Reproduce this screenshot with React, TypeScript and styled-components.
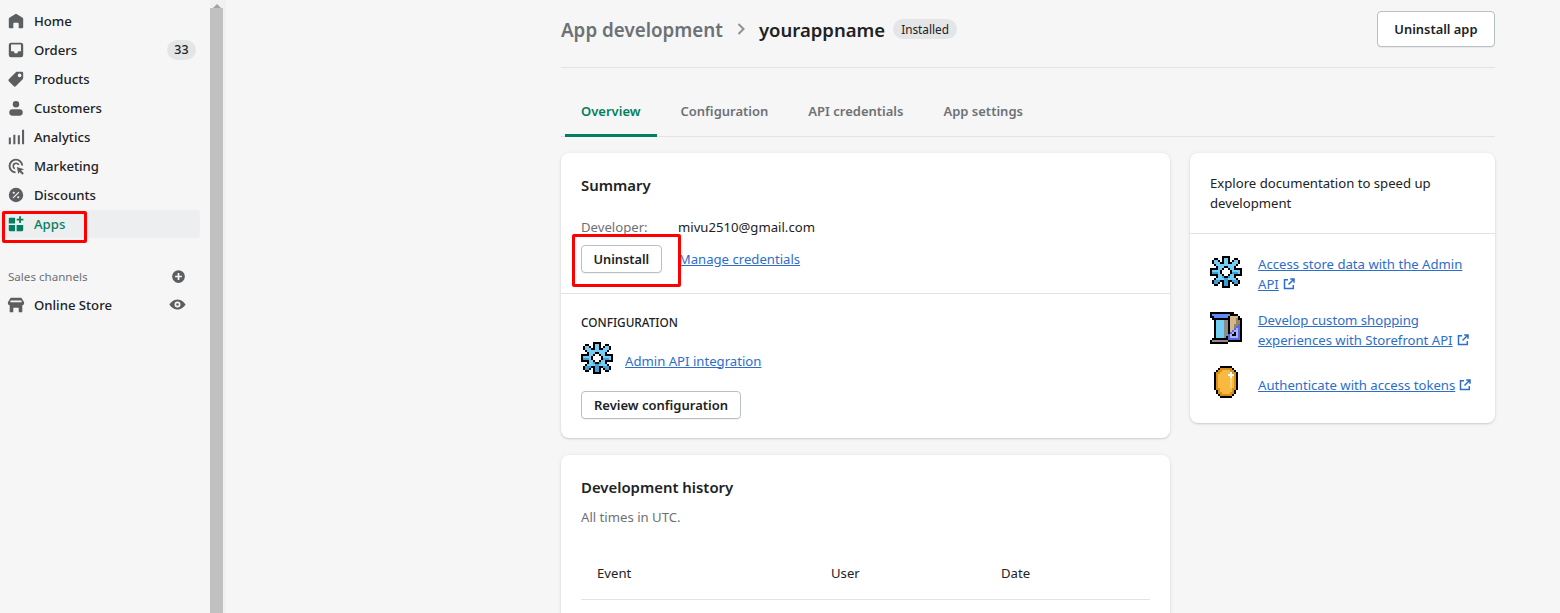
import React from "react";
import styled, { createGlobalStyle } from "styled-components";

const GlobalStyle = createGlobalStyle`
  html, body {
    margin: 0;
    padding: 0;
    overflow: hidden;
    background: #f6f6f7;
    font-family: "Noto Sans", "Liberation Sans", sans-serif;
    font-size: 13.15px;
    color: #202223;
  }
  * { box-sizing: border-box; }
`;

const GEAR = [
  "......kkkk......",
  "..kk..kbbk..kk..",
  ".kbbk.kbbk.kbbk.",
  ".kbbbkkbbkkbbbk.",
  "..kbbbbbbbbbbk..",
  "...kbbbkkbbbk...",
  "kkkkbbk..kbbkkkk",
  "kbbbbk....kbbbbk",
  "kdddbk....kdddbk",
  "kkkkbbk..kbbkkkk",
  "...kbbdkkdbbk...",
  "..kbbbbddbbbbk..",
  ".kdddkkddkkdddk.",
  ".kddk.kddk.kddk.",
  "..kk..kddk..kk..",
  "......kkkk......",
];

const TOKEN = [
  ".....kkkkkk.....",
  "....kooooook....",
  "...kooyyyyook...",
  "..kooyyyyywook..",
  "..koyyyyywwwok..",
  "..koyyyyyywyok..",
  "..koyyyyyylyok..",
  "..koyyyyyylyok..",
  "..koyyyyyylyok..",
  "..koyyyyyylyok..",
  "..koyyyyyylyok..",
  "..kooyyyyyyook..",
  "...koyyyyyyok...",
  "...kooyyyyook...",
  "....kooooook....",
  ".....kkkkkk.....",
];

const BOOK = [
  "kkkkkkkkkkkk....",
  "kuuuuuuuuukkkk..",
  "kkuuuuuuukttttk.",
  ".kkkkkkkkktttnkk",
  "..kbbbbggktttnnk",
  "..kbbbbggktttnnk",
  "..kbbbbggkttnnPk",
  "..kbbbbggkttnPPk",
  "..kbbbbggkttPpPk",
  "..kbbbbggktPppPk",
  "..kbbbbggkPpkpPk",
  "..kbbbbggPpkkpPk",
  "..kbbbbgkPppppPk",
  ".kkkkkkkkPPPPPPk",
  "kggggggggkkkkkkk",
  "kkkkkkkkk.......",
];

const PIXEL_COLORS: Record<string, string> = {
  k: "#000000",
  b: "#74cdf3",
  d: "#3a9fd6",
  o: "#d98f1c",
  y: "#f7b93e",
  l: "#fbd27a",
  w: "#ffffff",
  u: "#5f8df5",
  g: "#8c8c8c",
  t: "#d3b88c",
  n: "#9c8259",
  p: "#aab4fa",
  P: "#5a68e0",
};

const PixelSvg = styled.svg`
  flex: none;
  margin-bottom: 5px;
`;

const PixelIcon = ({ rows }: { rows: string[] }) => (
  <PixelSvg width={32} height={32} viewBox="0 0 16 16" shapeRendering="crispEdges">
    {rows.map((row, y) =>
      row.split("").map((c, x) =>
        c === "." ? null : <rect key={`${x}-${y}`} x={x} y={y} width={1} height={1} fill={PIXEL_COLORS[c]} />
      )
    )}
  </PixelSvg>
);

const icons: Record<string, React.ReactNode> = {
  home: <path d="M18 7.7V17a1 1 0 0 1-1 1h-4v-5a1 1 0 0 0-1-1H8a1 1 0 0 0-1 1v5H3a1 1 0 0 1-1-1V7.7c0-.5.2-.9.6-1.2l6.8-4.3a1.1 1.1 0 0 1 1.2 0l6.8 4.3c.4.3.6.7.6 1.2z" />,
  orders: <path fillRule="evenodd" d="M4.5 2h11A2.5 2.5 0 0 1 18 4.5v11a2.5 2.5 0 0 1-2.5 2.5h-11A2.5 2.5 0 0 1 2 15.5v-11A2.5 2.5 0 0 1 4.5 2zM4.5 4v7.5h3l1 2h3l1-2h3V4h-11z" />,
  products: <path fillRule="evenodd" d="M11 2h5.5c.8 0 1.5.7 1.5 1.5V9c0 .5-.2.9-.5 1.2l-7.8 7.8a1.5 1.5 0 0 1-2.1 0L2 12.4a1.5 1.5 0 0 1 0-2.1l7.8-7.8c.3-.3.7-.5 1.2-.5zM14 8a2 2 0 1 0 0-4 2 2 0 0 0 0 4z" />,
  customers: <path d="M10 9.5a3.6 3.6 0 1 0 0-7.2 3.6 3.6 0 0 0 0 7.2zM6 11.5h8a3.5 3.5 0 0 1 0 7H6a3.5 3.5 0 0 1 0-7z" />,
  analytics: <path d="M2 10.5h2.3V18H2zM7 7.500h2.3V18H7zM12 8h2.3v10H12zM16.700 2H19v16h-2.300z" />,
  marketing: <path fillRule="evenodd" d="M10 2a8 8 0 0 1 8 7.5h-2.100A6 6 0 1 0 9.500 16V18A8 8 0 0 1 10 2zm0 4a4 4 0 0 1 3.900 3.200l-2.200-.7A2 2 0 1 0 8.500 11.700l.7 2.200A4 4 0 0 1 10 6zm1 5 8 2.500-3.300 1.600 3 3-1.600 1.600-3-3L12.500 19 11 11z" />,
  discounts: <path fillRule="evenodd" d="M10 2a8 8 0 1 1 0 16 8 8 0 0 1 0-16zM7.500 6.300a1.200 1.200 0 1 0 0 2.400 1.200 1.200 0 0 0 0-2.400zm5 5a1.200 1.200 0 1 0 0 2.400 1.200 1.200 0 0 0 0-2.400zM12.800 6.300l-6.500 6.500.9.9 6.500-6.500-.9-.9z" />,
  apps: <path d="M3.200 3H9v6.500H2V4.200C2 3.500 2.500 3 3.200 3zM2 11h7v7H3.200C2.500 18 2 17.500 2 16.800V11zM10.700 11H18v5.800c0 .7-.5 1.200-1.200 1.200h-6.100v-7zM13.500 1.500h2v2.700h2.700v2h-2.700v2.700h-2V6.200h-2.700v-2h2.700V1.500z" />,
  store: <path fillRule="evenodd" d="M4 2h12l3 5v1a2.500 2.500 0 0 1-2 2.400V18h-4v-5H7v5H3v-7.600A2.500 2.500 0 0 1 1 8V7l3-5zm-.2 3v2h12.400V5H3.800z" />,
  eye: <path fillRule="evenodd" d="M10 4c4.500 0 8 3.500 9.500 6-1.500 2.500-5 6-9.500 6s-8-3.500-9.500-6C2 7.500 5.500 4 10 4zm0 2.500a3.500 3.500 0 1 0 0 7 3.500 3.500 0 0 0 0-7zm0 2a1.500 1.500 0 1 1 0 3 1.500 1.500 0 0 1 0-3z" />,
  plus: <path fillRule="evenodd" d="M10 2.500a7.500 7.500 0 1 1 0 15 7.500 7.500 0 0 1 0-15zM9 6v3H6v2h3v3h2v-3h3V9h-3V6H9z" />,
};

const Glyph = ({ name, color = "#5c5f62", size = 18 }: { name: string; color?: string; size?: number }) => (
  <svg width={size} height={size} viewBox="0 0 20 20" fill={color}>{icons[name]}</svg>
);

const ExternalIcon = () => (
  <ExternalSvg width="12" height="12" viewBox="0 0 12 12" fill="none" stroke="#2c6ecb" strokeWidth="1.5">
    <path d="M5 1.700H1.500v8.800h8.800V7" />
    <path d="M5.500 6.500 10.500 1.500M7.200 1h3.800v3.800" />
  </ExternalSvg>
);

const Page = styled.div`
  display: flex;
  height: 613px;
  overflow: hidden;
  position: relative;
`;

const Sidebar = styled.nav`
  width: 210px;
  flex: none;
  padding-top: 6px;
`;

const NavItem = styled.div<{ $active?: boolean }>`
  display: flex;
  align-items: center;
  height: ${(p) => (p.$active ? "28px" : "29px")};
  margin: ${(p) => (p.$active ? "1px 10px 0 0" : "0")};
  padding: 0 14px 0 7px;
  border-radius: 0 3px 3px 0;
  background: ${(p) => (p.$active ? "#edeef0" : "transparent")};
  color: ${(p) => (p.$active ? "#008060" : "#202223")};
  font-weight: 500;
  svg { flex: none; }
`;

const StoreItem = styled(NavItem)`
  padding-right: 24px;
`;

const NavLabel = styled.span`
  margin-left: 9px;
  flex: 1;
`;

const CountPill = styled.span`
  width: 29px;
  height: 20px;
  border-radius: 10px;
  background: #e4e5e7;
  font-size: 12.5px;
  line-height: 20px;
  text-align: center;
`;

const ChannelHead = styled.div`
  display: flex;
  align-items: center;
  justify-content: space-between;
  margin-top: 24px;
  padding: 0 23px 0 8px;
  height: 28px;
  font-size: 11.6px;
  color: #6d7175;
`;

const Scrollbar = styled.div`
  width: 16px;
  flex: none;
  background: #f1f1f1;
  display: flex;
  flex-direction: column;
  align-items: flex-start;
`;

const ScrollArrow = styled.div`
  width: 13px;
  height: 8px;
  background: #f1f1f1;
  display: flex;
  justify-content: center;
  &::before {
    content: "";
    border-left: 4px solid transparent;
    border-right: 4px solid transparent;
    border-bottom: 4px solid #a3a3a3;
  }
`;

const ScrollThumb = styled.div`
  width: 13px;
  flex: 1;
  background: #c1c1c1;
`;

const Main = styled.main`
  flex: 1;
  min-width: 0;
  padding-left: 335px;
  padding-right: 65px;
`;

const Header = styled.header`
  display: flex;
  align-items: center;
  height: 68px;
  padding-bottom: 9px;
  border-bottom: 1px solid #e1e3e5;
`;

const Crumb = styled.span`
  margin-top: 2px;
  font-size: 18.8px;
  font-weight: 600;
  color: #6d7175;
`;

const Title = styled.h1`
  margin: 0;
  font-size: 18.5px;
  font-weight: 600;
  color: #202223;
`;

const CrumbChevron = styled.svg`
  margin: 0 10px;
`;

const Badge = styled.span`
  margin-left: 8px;
  padding: 0 8px;
  height: 20px;
  line-height: 20px;
  border-radius: 10px;
  background: #e4e5e7;
  font-size: 11.8px;
`;

const Button = styled.button`
  height: 28px;
  padding: 0 12px;
  border: 1px solid #babfc3;
  border-radius: 4px;
  background: #fff;
  font: 600 13px "Noto Sans", "Liberation Sans", sans-serif;
  color: #202223;
  box-shadow: 0 1px 0 rgba(0, 0, 0, 0.05);
`;

const HeaderButton = styled(Button)`
  margin-left: auto;
  height: 36px;
  padding: 0 16.5px;
  font-size: 12.9px;
`;

const UninstallButton = styled(Button)`
  padding: 0 11.5px;
  font-size: 12.8px;
`;

const Tabs = styled.div`
  display: flex;
  height: 69px;
  padding: 0 4px;
  border-bottom: 1px solid #e1e3e5;
`;

const Tab = styled.div<{ $active?: boolean }>`
  display: flex;
  align-items: center;
  height: 69px;
  padding: 20px 16px 0;
  font-weight: 600;
  font-size: 13px;
  color: ${(p) => (p.$active ? "#008060" : "#6d7175")};
  border-bottom: 3px solid ${(p) => (p.$active ? "#008060" : "transparent")};
  margin-right: 8px;
`;

const Columns = styled.div`
  display: grid;
  grid-template-columns: 609px 305px;
  gap: 20px;
  margin-top: 16px;
  align-items: start;
`;

const Stack = styled.div`
  display: flex;
  flex-direction: column;
  gap: 17px;
`;

const Card = styled.section`
  background: #fff;
  border-radius: 8px;
  box-shadow: 0 0 5px rgba(23, 24, 24, 0.05), 0 1px 2px rgba(0, 0, 0, 0.15);
`;

const HistoryCard = styled(Card)`
  min-height: 320px;
`;

const Section = styled.div<{ $divided?: boolean }>`
  padding: 20px;
  border-top: ${(p) => (p.$divided ? "1px solid #e1e3e5" : "none")};
`;

const ConfigSection = styled(Section)`
  padding-top: 19px;
  padding-bottom: 19px;
`;

const CardTitle = styled.h2`
  margin: 0;
  font-size: 14.9px;
  line-height: 24px;
  font-weight: 600;
`;

const FieldRow = styled.div`
  display: flex;
  margin-top: 20px;
  line-height: 20px;
`;

const FieldLabel = styled.span`
  width: 97px;
  color: #6d7175;
`;

const ActionRow = styled.div`
  display: flex;
  align-items: center;
  gap: 17px;
  margin-top: 8px;
`;

const TextLink = styled.a`
  color: #2c6ecb;
  text-decoration: underline;
`;

const Overline = styled.div`
  font-size: 11.8px;
  line-height: 18px;
  font-weight: 500;
`;

const IconRow = styled.div`
  display: flex;
  align-items: center;
  gap: 12px;
  margin-top: 11px;
`;

const ReviewButton = styled(Button)`
  margin-top: 12px;
  display: block;
`;

const Muted = styled.p`
  margin: 8px 0 0;
  color: #6d7175;
  line-height: 20px;
`;

const HistoryHead = styled.div`
  display: grid;
  grid-template-columns: 234px 170px 1fr;
  margin-top: 19px;
  padding: 0 16px;
  height: 54px;
  align-items: center;
  border-bottom: 1px solid #e1e3e5;
`;

const DocIntro = styled.p`
  margin: 0;
  line-height: 20px;
`;

const DocItem = styled.div`
  display: flex;
  align-items: center;
  gap: 16px;
  margin-bottom: 16px;
  line-height: 20px;
  &:last-child { margin-bottom: 0; }
`;

const ExternalSvg = styled.svg`
  margin-left: 4px;
  vertical-align: -1px;
`;

const Annotation = styled.div`
  position: absolute;
  border: 3px solid #ff0000;
  border-radius: 2px;
`;

const AppsMark = styled(Annotation)`
  left: 2px;
  top: 211px;
  width: 85px;
  height: 32px;
`;

const UninstallMark = styled(Annotation)`
  left: 572px;
  top: 234px;
  width: 109px;
  height: 53px;
`;

const navItems = [
  { name: "Home", icon: "home" },
  { name: "Orders", icon: "orders", count: 33 },
  { name: "Products", icon: "products" },
  { name: "Customers", icon: "customers" },
  { name: "Analytics", icon: "analytics" },
  { name: "Marketing", icon: "marketing" },
  { name: "Discounts", icon: "discounts" },
];

const tabs = ["Overview", "Configuration", "API credentials", "App settings"];

export default function App() {
  return (
    <Page>
      <GlobalStyle />
      <Sidebar>
        {navItems.map((item) => (
          <NavItem key={item.name}>
            <Glyph name={item.icon} />
            <NavLabel>{item.name}</NavLabel>
            {item.count && <CountPill>{item.count}</CountPill>}
          </NavItem>
        ))}
        <NavItem $active>
          <Glyph name="apps" color="#008060" />
          <NavLabel>Apps</NavLabel>
        </NavItem>
        <ChannelHead>
          Sales channels
          <Glyph name="plus" size={17} />
        </ChannelHead>
        <StoreItem>
          <Glyph name="store" />
          <NavLabel>Online Store</NavLabel>
          <Glyph name="eye" size={17} />
        </StoreItem>
      </Sidebar>
      <Scrollbar>
        <ScrollArrow />
        <ScrollThumb />
      </Scrollbar>
      <Main>
        <Header>
          <Crumb>App development</Crumb>
          <CrumbChevron width="16" height="16" viewBox="0 0 16 16" fill="none" stroke="#8c9196" strokeWidth="2">
            <path d="M5.5 3 10.5 8 5.5 13" />
          </CrumbChevron>
          <Title>yourappname</Title>
          <Badge>Installed</Badge>
          <HeaderButton>Uninstall app</HeaderButton>
        </Header>
        <Tabs>
          {tabs.map((tab, i) => (
            <Tab key={tab} $active={i === 0}>{tab}</Tab>
          ))}
        </Tabs>
        <Columns>
          <Stack>
            <Card>
              <Section>
                <CardTitle>Summary</CardTitle>
                <FieldRow>
                  <FieldLabel>Developer:</FieldLabel>
                  <span>mivu2510@gmail.com</span>
                </FieldRow>
                <ActionRow>
                  <UninstallButton>Uninstall</UninstallButton>
                  <TextLink>Manage credentials</TextLink>
                </ActionRow>
              </Section>
              <ConfigSection $divided>
                <Overline>CONFIGURATION</Overline>
                <IconRow>
                  <PixelIcon rows={GEAR} />
                  <TextLink>Admin API integration</TextLink>
                </IconRow>
                <ReviewButton>Review configuration</ReviewButton>
              </ConfigSection>
            </Card>
            <HistoryCard>
              <Section>
                <CardTitle>Development history</CardTitle>
                <Muted>All times in UTC.</Muted>
                <HistoryHead>
                  <span>Event</span>
                  <span>User</span>
                  <span>Date</span>
                </HistoryHead>
              </Section>
            </HistoryCard>
          </Stack>
          <Card>
            <Section>
              <DocIntro>Explore documentation to speed up development</DocIntro>
            </Section>
            <Section $divided>
              <DocItem>
                <PixelIcon rows={GEAR} />
                <span>
                  <TextLink>Access store data with the Admin API</TextLink>
                  <ExternalIcon />
                </span>
              </DocItem>
              <DocItem>
                <PixelIcon rows={BOOK} />
                <span>
                  <TextLink>Develop custom shopping experiences with Storefront API</TextLink>
                  <ExternalIcon />
                </span>
              </DocItem>
              <DocItem>
                <PixelIcon rows={TOKEN} />
                <span>
                  <TextLink>Authenticate with access tokens</TextLink>
                  <ExternalIcon />
                </span>
              </DocItem>
            </Section>
          </Card>
        </Columns>
      </Main>
      <AppsMark />
      <UninstallMark />
    </Page>
  );
}
